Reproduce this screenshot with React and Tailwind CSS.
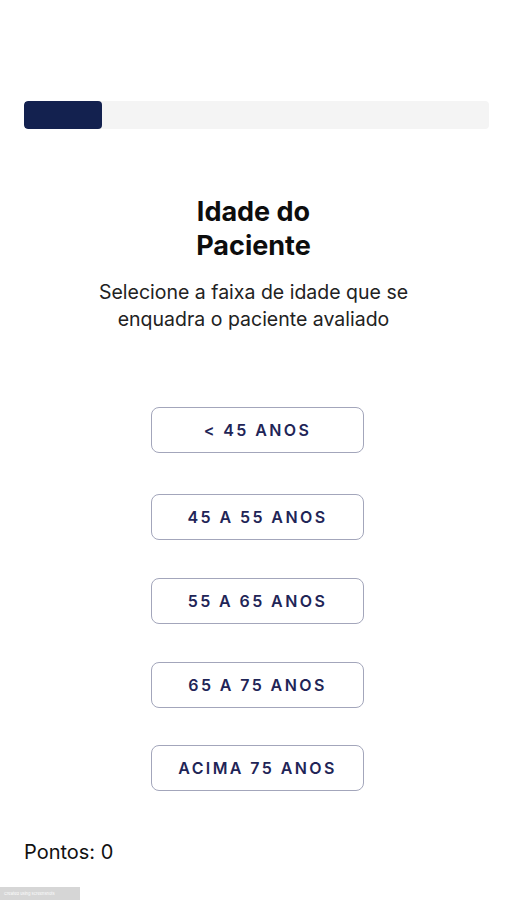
const OPTIONS = ['< 45 ANOS', '45 A 55 ANOS', '55 A 65 ANOS', '65 A 75 ANOS', 'ACIMA 75 ANOS']

const MARGINS = ['mt-0', 'mt-[41px]', 'mt-[38px]', 'mt-[38px]', 'mt-[37px]']

export default function App() {
  return (
    <div className="relative min-h-[900px] bg-white px-6 pt-[101px] font-['Inter','Liberation_Sans',sans-serif] text-[#111]">
      <div className="h-[28px] w-[465px] overflow-hidden rounded-[4px] bg-[#f4f4f4]">
        <div className="h-full w-[78px] rounded-[4px] bg-[#13214f]" />
      </div>

      <h1 className="mx-auto mt-[66px] w-[170px] text-center text-[27px] font-bold leading-[34px] text-[#0d0d0d]">
        Idade do Paciente
      </h1>
      <p className="mx-auto mt-[16px] w-[340px] text-center text-[19.5px] leading-[27px] text-[#222]">
        Selecione a faixa de idade que se enquadra o paciente avaliado
      </p>

      <div className="mt-[74px] flex flex-col pl-[127px]">
        {OPTIONS.map((opt, i) => (
          <button
            key={opt}
            type="button"
            className={`${MARGINS[i]} flex h-[46px] w-[213px] items-center justify-center rounded-[8px] border border-[#a3a6bb] bg-white text-[16px] font-semibold tracking-[2.4px] text-[#1f2557]`}
          >
            {opt}
          </button>
        ))}
      </div>

      <p className="mt-[47px] text-[20px] leading-[28px] text-[#111]">Pontos: 0</p>

      <div className="absolute bottom-0 left-0 flex h-[13px] w-[80px] items-center bg-[#d6d6d6] px-[4px] text-[4px] text-white">
        Created using screenshots
      </div>
    </div>
  )
}
